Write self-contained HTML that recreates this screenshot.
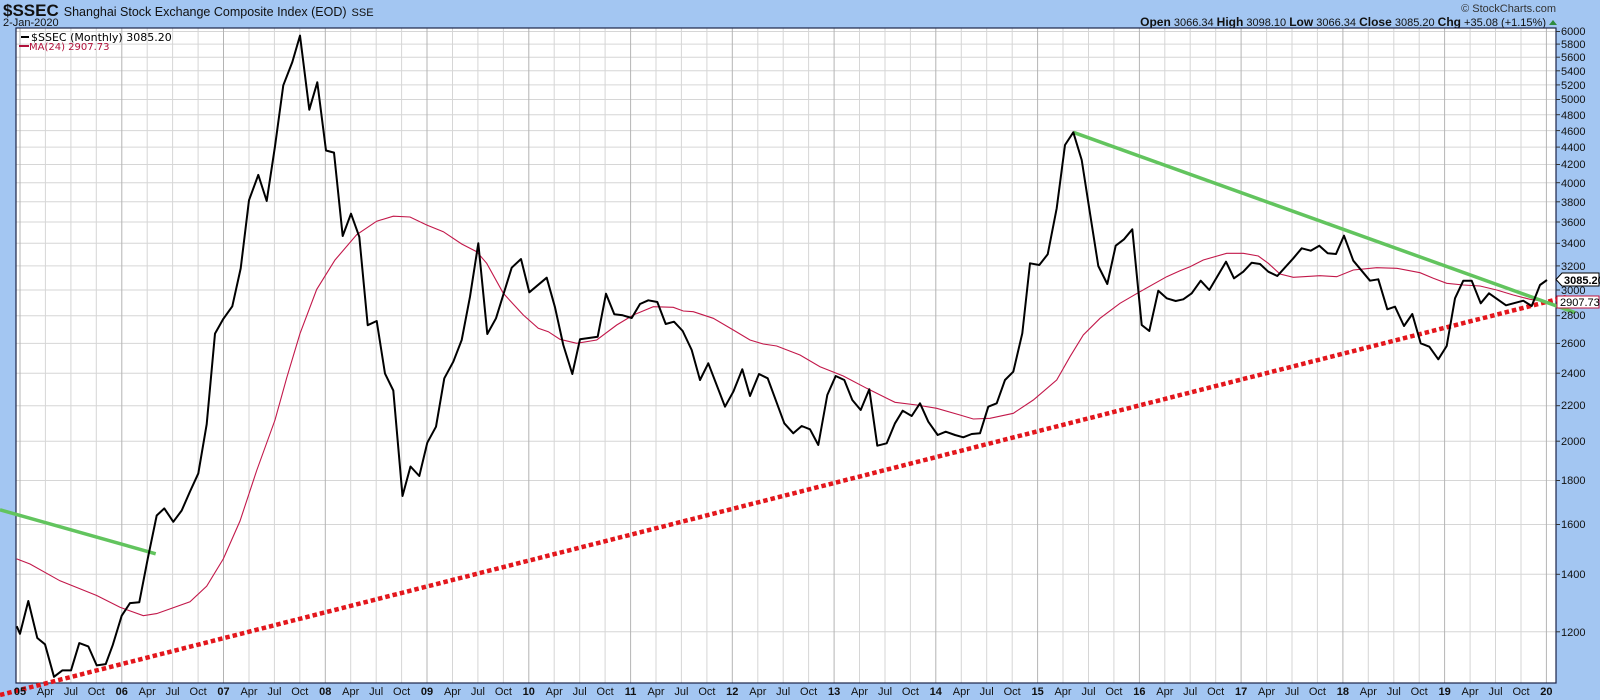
<!DOCTYPE html>
<html><head><meta charset="utf-8"><style>
html,body{margin:0;padding:0;background:#a3c6f2;width:1600px;height:700px;overflow:hidden}
svg{display:block}
</style></head><body>
<svg width="1600" height="700" viewBox="0 0 1600 700" xmlns="http://www.w3.org/2000/svg" font-family="Liberation Sans, Arial, sans-serif">
<rect x="0" y="0" width="1600" height="700" fill="#a3c6f2"/>
<text x="3" y="16" font-size="17" font-weight="bold" fill="#111">$SSEC<tspan font-weight="normal" font-size="12.5" dx="5">Shanghai Stock Exchange Composite Index (EOD)</tspan><tspan font-weight="normal" font-size="11" dx="5">SSE</tspan></text>
<text x="3" y="26" font-size="11" fill="#111">2-Jan-2020</text>
<text x="1556" y="12" font-size="11" fill="#333" text-anchor="end">© StockCharts.com</text>
<text x="1546" y="26" font-size="11" fill="#111" text-anchor="end"><tspan font-weight="bold" font-size="12">Open</tspan> 3066.34  <tspan font-weight="bold" font-size="12">High</tspan> 3098.10  <tspan font-weight="bold" font-size="12">Low</tspan> 3066.34  <tspan font-weight="bold" font-size="12">Close</tspan> 3085.20  <tspan font-weight="bold" font-size="12">Chg</tspan> +35.08 (+1.15%)</text>
<polygon points="1549,25 1557,25 1553,20" fill="#2e8b3e"/>
<rect x="16" y="28" width="1540" height="655" fill="#fff"/>
<g stroke="#d6d6d6" stroke-width="1">
<line x1="16" x2="1556" y1="631.8" y2="631.8"/><line x1="16" x2="1556" y1="574.3" y2="574.3"/><line x1="16" x2="1556" y1="524.5" y2="524.5"/><line x1="16" x2="1556" y1="480.5" y2="480.5"/><line x1="16" x2="1556" y1="441.2" y2="441.2"/><line x1="16" x2="1556" y1="405.7" y2="405.7"/><line x1="16" x2="1556" y1="373.2" y2="373.2"/><line x1="16" x2="1556" y1="343.4" y2="343.4"/><line x1="16" x2="1556" y1="315.7" y2="315.7"/><line x1="16" x2="1556" y1="290" y2="290"/><line x1="16" x2="1556" y1="265.9" y2="265.9"/><line x1="16" x2="1556" y1="243.3" y2="243.3"/><line x1="16" x2="1556" y1="222" y2="222"/><line x1="16" x2="1556" y1="201.8" y2="201.8"/><line x1="16" x2="1556" y1="182.7" y2="182.7"/><line x1="16" x2="1556" y1="164.5" y2="164.5"/><line x1="16" x2="1556" y1="147.1" y2="147.1"/><line x1="16" x2="1556" y1="130.6" y2="130.6"/><line x1="16" x2="1556" y1="114.7" y2="114.7"/><line x1="16" x2="1556" y1="99.5" y2="99.5"/><line x1="16" x2="1556" y1="84.9" y2="84.9"/><line x1="16" x2="1556" y1="70.8" y2="70.8"/><line x1="16" x2="1556" y1="57.2" y2="57.2"/><line x1="16" x2="1556" y1="44.1" y2="44.1"/><line x1="16" x2="1556" y1="31.5" y2="31.5"/>
<line y1="28" y2="683" x1="45.4" x2="45.4"/><line y1="28" y2="683" x1="70.9" x2="70.9"/><line y1="28" y2="683" x1="96.3" x2="96.3"/><line y1="28" y2="683" x1="147.2" x2="147.2"/><line y1="28" y2="683" x1="172.6" x2="172.6"/><line y1="28" y2="683" x1="198.1" x2="198.1"/><line y1="28" y2="683" x1="249" x2="249"/><line y1="28" y2="683" x1="274.4" x2="274.4"/><line y1="28" y2="683" x1="299.8" x2="299.8"/><line y1="28" y2="683" x1="350.7" x2="350.7"/><line y1="28" y2="683" x1="376.2" x2="376.2"/><line y1="28" y2="683" x1="401.6" x2="401.6"/><line y1="28" y2="683" x1="452.5" x2="452.5"/><line y1="28" y2="683" x1="477.9" x2="477.9"/><line y1="28" y2="683" x1="503.4" x2="503.4"/><line y1="28" y2="683" x1="554.2" x2="554.2"/><line y1="28" y2="683" x1="579.7" x2="579.7"/><line y1="28" y2="683" x1="605.1" x2="605.1"/><line y1="28" y2="683" x1="656" x2="656"/><line y1="28" y2="683" x1="681.4" x2="681.4"/><line y1="28" y2="683" x1="706.9" x2="706.9"/><line y1="28" y2="683" x1="757.8" x2="757.8"/><line y1="28" y2="683" x1="783.2" x2="783.2"/><line y1="28" y2="683" x1="808.6" x2="808.6"/><line y1="28" y2="683" x1="859.5" x2="859.5"/><line y1="28" y2="683" x1="885" x2="885"/><line y1="28" y2="683" x1="910.4" x2="910.4"/><line y1="28" y2="683" x1="961.3" x2="961.3"/><line y1="28" y2="683" x1="986.7" x2="986.7"/><line y1="28" y2="683" x1="1012.2" x2="1012.2"/><line y1="28" y2="683" x1="1063" x2="1063"/><line y1="28" y2="683" x1="1088.5" x2="1088.5"/><line y1="28" y2="683" x1="1113.9" x2="1113.9"/><line y1="28" y2="683" x1="1164.8" x2="1164.8"/><line y1="28" y2="683" x1="1190.2" x2="1190.2"/><line y1="28" y2="683" x1="1215.7" x2="1215.7"/><line y1="28" y2="683" x1="1266.6" x2="1266.6"/><line y1="28" y2="683" x1="1292" x2="1292"/><line y1="28" y2="683" x1="1317.4" x2="1317.4"/><line y1="28" y2="683" x1="1368.3" x2="1368.3"/><line y1="28" y2="683" x1="1393.8" x2="1393.8"/><line y1="28" y2="683" x1="1419.2" x2="1419.2"/><line y1="28" y2="683" x1="1470.1" x2="1470.1"/><line y1="28" y2="683" x1="1495.5" x2="1495.5"/><line y1="28" y2="683" x1="1521" x2="1521"/>
</g>
<g stroke="#b4b4b4" stroke-width="1">
<line y1="28" y2="683" x1="20" x2="20"/><line y1="28" y2="683" x1="121.8" x2="121.8"/><line y1="28" y2="683" x1="223.5" x2="223.5"/><line y1="28" y2="683" x1="325.3" x2="325.3"/><line y1="28" y2="683" x1="427" x2="427"/><line y1="28" y2="683" x1="528.8" x2="528.8"/><line y1="28" y2="683" x1="630.6" x2="630.6"/><line y1="28" y2="683" x1="732.3" x2="732.3"/><line y1="28" y2="683" x1="834.1" x2="834.1"/><line y1="28" y2="683" x1="935.8" x2="935.8"/><line y1="28" y2="683" x1="1037.6" x2="1037.6"/><line y1="28" y2="683" x1="1139.4" x2="1139.4"/><line y1="28" y2="683" x1="1241.1" x2="1241.1"/><line y1="28" y2="683" x1="1342.9" x2="1342.9"/><line y1="28" y2="683" x1="1444.6" x2="1444.6"/><line y1="28" y2="683" x1="1546.4" x2="1546.4"/>
</g>
<rect x="16" y="28" width="1540" height="655" fill="none" stroke="#1c2448" stroke-width="1.2"/>
<polyline fill="none" stroke="#c2184a" stroke-width="1.1" points="16.7,558.9 30,564 60,580.8 96.7,595.5 120,607.3 143.3,615.7 156.7,613.6 190,601.8 206.7,586.2 223.3,558.9 240,521 256.7,470.5 275,420 286.7,377.9 300,333.6 316.7,289.4 335,260 356.7,234.7 376.7,221.2 393.3,216.2 410,217 426.7,225 443.3,231.7 461.7,244 476.7,251.7 486.7,263.3 503.3,293.3 523.3,315 538.3,328.3 548.3,331.7 560,339.3 576.7,343.3 596.7,340 616.7,325 633.3,315 653.3,306.7 673.3,307.3 683.3,311 693.3,311.7 713.3,318.3 733.3,330 750,340 763.3,344 776.7,346 800,355 820,366.7 843.3,376 866.7,388.3 895,402.3 916.7,405 936.7,408.3 960,415 973.3,419 990,418.3 1013.3,413.3 1033.3,400 1056.7,380 1070,356.7 1083.3,335 1100,318.3 1120,303.3 1140,291.7 1166.7,276.7 1180,270.7 1190,266.7 1203.3,260 1226.7,253.3 1243.3,253.3 1258.3,256 1268.3,263.3 1280,274 1293.3,277.3 1320,275.7 1336.7,276.7 1353.3,270 1376.7,267.7 1396.7,268.3 1420,272.7 1433.3,278.3 1446.7,283.3 1463.3,285 1480,286 1496.7,290 1513.3,295 1530,299.3 1547,301.7"/>
<line x1="0" y1="695" x2="1566" y2="297" stroke="#e3161c" stroke-width="4.5" stroke-dasharray="4.5 3"/>
<line x1="0" y1="509.8" x2="155.7" y2="553.8" stroke="#62c45e" stroke-width="3.5"/>
<line x1="1073.3" y1="132.3" x2="1575" y2="312.6" stroke="#62c45e" stroke-width="3.5"/>
<polyline fill="none" stroke="#000" stroke-width="2" stroke-linejoin="round" points="16.7,626.2 20,633.8 28.3,601 37.3,638 45,644.3 54,676.8 62.3,670.4 71,670.4 79.3,643.1 88.3,646.4 96.7,665.4 105.7,664.1 112.7,645.2 121.7,615.7 130,603.1 139.3,602.2 147.7,558.9 156.7,515.5 164.3,508.4 173.3,521.8 181.7,510.5 190,491.5 198.3,473.4 206.7,424.2 215,333.6 223.3,318.9 232.3,306.3 240.7,268.4 249,200.2 258.3,174.9 266.7,201 275,146.3 283.3,85.3 292.3,62.1 300,35.6 309.3,109.7 317.3,82.3 326,150.5 334,152.6 342.7,236 351,213.7 359.3,236.8 367.7,325.2 376.7,321 385,373.6 393.3,390.5 402.5,496 410.5,466.5 419.3,476 427.3,442.7 436,426.7 444.3,378.3 453.3,361.7 461.7,340 470,296.7 478.3,243.3 487.3,334 496,318.3 511.7,267.7 521,259 529.3,292.3 546.7,277.7 555,307.3 563.3,345 572.3,374 580,339.3 597.7,336.7 606,293.7 614.3,314.3 622.7,315.3 631.7,318 640,304 648.3,300.3 657.3,302 665.7,324 674,321.7 682.7,331 691.7,350 700,380 708.3,363.3 725,406.7 733.3,391.7 742.3,369.3 750,396 759,374 767.7,378.3 784.3,423.3 793.3,433.3 801.7,426 810,429.3 818.3,445 827.3,395 835.7,376 844.3,380 852.3,400 860.7,410 869.3,389.3 877.3,445.7 886.7,443.3 895,423.3 902.7,410.7 911.7,416 920,403.3 928.3,421.7 937.7,435 945.7,431.7 955,435 963.3,437.3 971.7,434 980,433.3 988.3,406.7 996.7,403.3 1005,380 1013.3,371.7 1022.3,333.3 1030,263.3 1039.3,265 1047.7,254.3 1056.7,208.3 1065,145 1073.3,132.3 1081.7,160 1090,213.3 1098.3,266 1107.3,284 1115.7,245.7 1124,239.3 1132.3,229.3 1141.7,325 1149.3,331 1158.3,290.7 1166.7,298.3 1175.7,301 1183.3,299.3 1191.7,293.3 1200.7,280.7 1209.3,290 1226,261.7 1234,278.3 1243.3,271.7 1251.7,262.7 1260,264 1268.3,271.7 1277.3,276 1293.3,258.3 1301.7,248.3 1310.7,250.7 1319.3,245.7 1327.7,253.3 1336,254 1344,235.7 1353.3,260.7 1370,280.7 1378.3,279.3 1387.3,309.3 1395,306.7 1404,326 1412.3,314 1420.7,343.3 1429.3,346.7 1438.3,359.3 1446.7,346 1455,298.3 1463.3,280.7 1471.7,280.7 1480.7,303.3 1489,293.3 1506,305.3 1523.3,300.7 1531.7,306 1540,285 1547,280"/>
<g font-family="DejaVu Sans, Liberation Sans, sans-serif" font-size="11">
<line x1="21" y1="37" x2="29" y2="37" stroke="#000" stroke-width="2"/>
<text x="31" y="41" fill="#000">$SSEC (Monthly) 3085.20</text>
<line x1="19" y1="46" x2="29" y2="46" stroke="#b0103a" stroke-width="2"/>
<text x="29" y="50" fill="#b0103a" font-size="10">MA(24) 2907.73</text>
</g>
<g font-size="11" fill="#111">
<text x="1561" y="636">1200</text><text x="1561" y="578">1400</text><text x="1561" y="528">1600</text><text x="1561" y="484">1800</text><text x="1561" y="445">2000</text><text x="1561" y="409">2200</text><text x="1561" y="377">2400</text><text x="1561" y="347">2600</text><text x="1561" y="319">2800</text><text x="1561" y="294">3000</text><text x="1561" y="270">3200</text><text x="1561" y="247">3400</text><text x="1561" y="226">3600</text><text x="1561" y="206">3800</text><text x="1561" y="187">4000</text><text x="1561" y="168">4200</text><text x="1561" y="151">4400</text><text x="1561" y="135">4600</text><text x="1561" y="119">4800</text><text x="1561" y="103">5000</text><text x="1561" y="89">5200</text><text x="1561" y="75">5400</text><text x="1561" y="61">5600</text><text x="1561" y="48">5800</text><text x="1561" y="35">6000</text>
</g>
<g stroke="#333" stroke-width="1">
<line x1="1556" x2="1560" y1="631.8" y2="631.8"/><line x1="1556" x2="1560" y1="574.3" y2="574.3"/><line x1="1556" x2="1560" y1="524.5" y2="524.5"/><line x1="1556" x2="1560" y1="480.5" y2="480.5"/><line x1="1556" x2="1560" y1="441.2" y2="441.2"/><line x1="1556" x2="1560" y1="405.7" y2="405.7"/><line x1="1556" x2="1560" y1="373.2" y2="373.2"/><line x1="1556" x2="1560" y1="343.4" y2="343.4"/><line x1="1556" x2="1560" y1="315.7" y2="315.7"/><line x1="1556" x2="1560" y1="290" y2="290"/><line x1="1556" x2="1560" y1="265.9" y2="265.9"/><line x1="1556" x2="1560" y1="243.3" y2="243.3"/><line x1="1556" x2="1560" y1="222" y2="222"/><line x1="1556" x2="1560" y1="201.8" y2="201.8"/><line x1="1556" x2="1560" y1="182.7" y2="182.7"/><line x1="1556" x2="1560" y1="164.5" y2="164.5"/><line x1="1556" x2="1560" y1="147.1" y2="147.1"/><line x1="1556" x2="1560" y1="130.6" y2="130.6"/><line x1="1556" x2="1560" y1="114.7" y2="114.7"/><line x1="1556" x2="1560" y1="99.5" y2="99.5"/><line x1="1556" x2="1560" y1="84.9" y2="84.9"/><line x1="1556" x2="1560" y1="70.8" y2="70.8"/><line x1="1556" x2="1560" y1="57.2" y2="57.2"/><line x1="1556" x2="1560" y1="44.1" y2="44.1"/><line x1="1556" x2="1560" y1="31.5" y2="31.5"/>
</g>
<polygon points="1556,279.5 1562,273 1599,273 1599,286 1562,286" fill="#fff" stroke="#000" stroke-width="1"/>
<text x="1564" y="284" font-size="11" font-weight="bold" fill="#000">3085.20</text>
<rect x="1557" y="296" width="42" height="12" fill="#fff" stroke="#c0143c" stroke-width="1"/>
<text x="1560" y="306" font-size="11" fill="#000">2907.73</text>
<g font-size="11" fill="#111" text-anchor="middle">
<text x="20" y="695" font-weight="bold">05</text><text x="45.4" y="695">Apr</text><text x="70.9" y="695">Jul</text><text x="96.3" y="695">Oct</text>
<text x="121.8" y="695" font-weight="bold">06</text><text x="147.2" y="695">Apr</text><text x="172.6" y="695">Jul</text><text x="198.1" y="695">Oct</text>
<text x="223.5" y="695" font-weight="bold">07</text><text x="249" y="695">Apr</text><text x="274.4" y="695">Jul</text><text x="299.8" y="695">Oct</text>
<text x="325.3" y="695" font-weight="bold">08</text><text x="350.7" y="695">Apr</text><text x="376.2" y="695">Jul</text><text x="401.6" y="695">Oct</text>
<text x="427" y="695" font-weight="bold">09</text><text x="452.5" y="695">Apr</text><text x="477.9" y="695">Jul</text><text x="503.4" y="695">Oct</text>
<text x="528.8" y="695" font-weight="bold">10</text><text x="554.2" y="695">Apr</text><text x="579.7" y="695">Jul</text><text x="605.1" y="695">Oct</text>
<text x="630.6" y="695" font-weight="bold">11</text><text x="656" y="695">Apr</text><text x="681.4" y="695">Jul</text><text x="706.9" y="695">Oct</text>
<text x="732.3" y="695" font-weight="bold">12</text><text x="757.8" y="695">Apr</text><text x="783.2" y="695">Jul</text><text x="808.6" y="695">Oct</text>
<text x="834.1" y="695" font-weight="bold">13</text><text x="859.5" y="695">Apr</text><text x="885" y="695">Jul</text><text x="910.4" y="695">Oct</text>
<text x="935.8" y="695" font-weight="bold">14</text><text x="961.3" y="695">Apr</text><text x="986.7" y="695">Jul</text><text x="1012.2" y="695">Oct</text>
<text x="1037.6" y="695" font-weight="bold">15</text><text x="1063" y="695">Apr</text><text x="1088.5" y="695">Jul</text><text x="1113.9" y="695">Oct</text>
<text x="1139.4" y="695" font-weight="bold">16</text><text x="1164.8" y="695">Apr</text><text x="1190.2" y="695">Jul</text><text x="1215.7" y="695">Oct</text>
<text x="1241.1" y="695" font-weight="bold">17</text><text x="1266.6" y="695">Apr</text><text x="1292" y="695">Jul</text><text x="1317.4" y="695">Oct</text>
<text x="1342.9" y="695" font-weight="bold">18</text><text x="1368.3" y="695">Apr</text><text x="1393.8" y="695">Jul</text><text x="1419.2" y="695">Oct</text>
<text x="1444.6" y="695" font-weight="bold">19</text><text x="1470.1" y="695">Apr</text><text x="1495.5" y="695">Jul</text><text x="1521" y="695">Oct</text>
<text x="1546.4" y="695" font-weight="bold">20</text>
</g>
</svg>
</body></html>
